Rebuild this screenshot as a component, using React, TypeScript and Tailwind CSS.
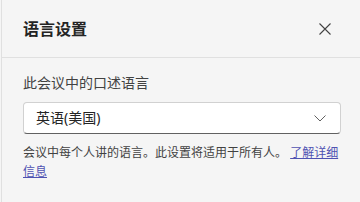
export default function App() {
    return (
        <div
            className="w-[360px] h-[202px] bg-[#f5f5f5] pl-px"
            style={{ fontFamily: '"Noto Sans", "Noto Sans CJK SC", sans-serif' }}
        >
            <div className="h-full border-l border-[#e0e0e0] flex flex-col">
                {/* Header */}
                <div className="h-[58px] flex items-center justify-between pl-[21px] pr-[19px] border-b border-[#e0e0e0] shrink-0">
                    <h1 className="text-[16px] font-bold text-[#242424] leading-[22px]">语言设置</h1>
                    <button className="w-8 h-8 flex items-center justify-center text-[#424242]">
                        <svg width="12" height="12" viewBox="0 0 12 12" fill="none">
                            <path d="M0.5 0.5L11.5 11.5M11.5 0.5L0.5 11.5" stroke="currentColor" strokeWidth="1.1" />
                        </svg>
                    </button>
                </div>

                {/* Body */}
                <div className="pl-[21px] pr-[19px] pt-[15px]">
                    <label className="block text-[14px] leading-[20px] text-[#424242]">此会议中的口述语言</label>

                    <div className="mt-[9px] h-[32px] bg-white rounded-[4px] border border-[#d1d1d1] border-b-[#616161] flex items-center justify-between pl-[12px] pr-[14px]">
                        <span className="text-[14px] leading-[20px] text-[#242424]">英语(美国)</span>
                        <svg width="12" height="7" viewBox="0 0 12 7" fill="none" className="text-[#616161]">
                            <path d="M0.5 0.5L6 6L11.5 0.5" stroke="currentColor" strokeWidth="1" />
                        </svg>
                    </div>

                    <p className="mt-[9px] text-[12px] leading-[19px] text-[#424242]">
                        会议中每个人讲的语言。此设置将适用于所有人。{' '}
                        <a href="#" className="text-[#4f52b2] underline">了解详细信息</a>
                    </p>
                </div>
            </div>
        </div>
    );
}
